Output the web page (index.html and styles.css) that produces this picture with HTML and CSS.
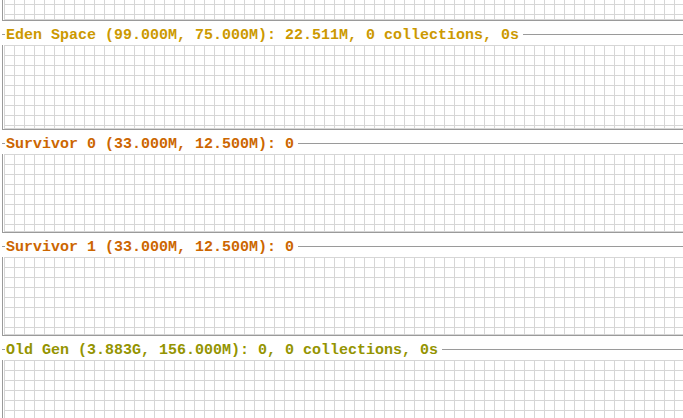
FILE: index.html
```html
<!DOCTYPE html>
<html>
<head>
<meta charset="utf-8">
<link rel="stylesheet" href="styles.css">
</head>
<body>
<div class="pane">
  <div class="section partial">
    <div class="body"><div class="grid g-partial"></div></div>
  </div>
  <div class="section">
    <div class="title"><span class="tick"></span><span class="label eden">Eden Space (99.000M, 75.000M): 22.511M, 0 collections, 0s</span><span class="rule"></span></div>
    <div class="body"><div class="grid g-eden"></div></div>
  </div>
  <div class="section">
    <div class="title"><span class="tick"></span><span class="label surv">Survivor 0 (33.000M, 12.500M): 0</span><span class="rule"></span></div>
    <div class="body"><div class="grid g-surv"></div></div>
  </div>
  <div class="section">
    <div class="title"><span class="tick"></span><span class="label surv">Survivor 1 (33.000M, 12.500M): 0</span><span class="rule"></span></div>
    <div class="body"><div class="grid g-surv"></div></div>
  </div>
  <div class="section">
    <div class="title"><span class="tick"></span><span class="label old">Old Gen (3.883G, 156.000M): 0, 0 collections, 0s</span><span class="rule"></span></div>
    <div class="body"><div class="grid g-old"></div></div>
  </div>
</div>
</body>
</html>
```

FILE: styles.css
```css
html, body {
  margin: 0;
  padding: 0;
  background: #ffffff;
  overflow: hidden;
}
.pane {
  width: 683px;
  height: 418px;
  overflow: hidden;
  display: flex;
  flex-direction: column;
  gap: 2px;
}
.section {
  margin-left: 2px;
  display: flex;
  flex-direction: column;
}
.partial {
  margin-top: -66px;
}
.title {
  height: 22px;
  display: flex;
  align-items: center;
}
.tick {
  width: 3px;
  height: 1px;
  background: #9a9a9a;
  margin-bottom: -1px;
}
.rule {
  flex: 1;
  height: 1px;
  background: #9a9a9a;
  margin-bottom: -1px;
}
.label {
  font-family: "Liberation Mono", "DejaVu Sans Mono", monospace;
  font-weight: bold;
  font-size: 15px;
  line-height: 18px;
  padding: 4px 4px 0 1px;
  white-space: nowrap;
}
.eden { color: #cc9900; }
.surv { color: #cc6600; }
.old { color: #949400; }
.body {
  border-left: 1px solid #9a9a9a;
  border-bottom: 1px solid #9a9a9a;
  padding-left: 1px;
}
.grid {
  background-color: #ffffff;
  background-image:
    linear-gradient(to right, #d6d6d6 1px, transparent 1px),
    linear-gradient(to bottom, #d6d6d6 1px, transparent 1px);
  background-size: 10px 10px;
  border-bottom: 1px solid #d6d6d6;
}
.g-partial { height: 85px; }
.g-eden { height: 83px; }
.g-surv { height: 77px; }
.g-old { height: 80px; }
```
